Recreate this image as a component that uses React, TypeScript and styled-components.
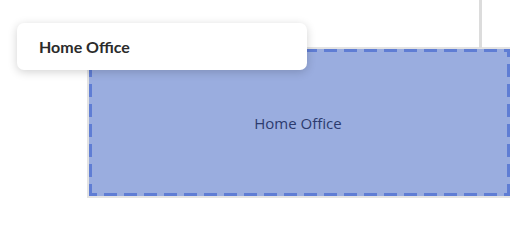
import React from "react";
import styled, { createGlobalStyle } from "styled-components";

const Global = createGlobalStyle`
  html, body { margin: 0; padding: 0; background: #ffffff; }
  body { width: 510px; height: 249px; overflow: hidden; }
`;

const Canvas = styled.div`
  position: relative;
  width: 510px;
  height: 249px;
  background: #ffffff;
  padding: 47px 0 0 87px;
  box-sizing: border-box;
  overflow: hidden;
`;

const GuideLine = styled.div`
  position: absolute;
  left: 479px;
  top: 0;
  width: 3px;
  height: 48px;
  background: #dcdcdc;
`;

const RegionFrame = styled.div`
  width: 423px;
  height: 151px;
  box-sizing: border-box;
  border: 2px solid #e3e3e3;
  border-right: none;
  display: flex;
`;

const dash = "#5f7dd4";

const Region = styled.div`
  flex: 1;
  box-sizing: border-box;
  background:
    linear-gradient(90deg, ${dash} 65%, transparent 65%) -5px 0 / 20px 3px repeat-x,
    linear-gradient(90deg, ${dash} 65%, transparent 65%) -5px 100% / 20px 3px repeat-x,
    linear-gradient(180deg, ${dash} 65%, transparent 65%) 0 -5px / 3px 20px repeat-y,
    linear-gradient(180deg, ${dash} 65%, transparent 65%) 100% -5px / 3px 20px repeat-y,
    #9aaddf;
  display: flex;
  align-items: center;
  justify-content: center;
  font-family: "Open Sans", "Noto Sans", sans-serif;
  font-size: 15px;
  color: #2c3b6e;
  padding-right: 3px;
`;

const Tooltip = styled.div`
  position: absolute;
  left: 17px;
  top: 23px;
  width: 290px;
  height: 47px;
  box-sizing: border-box;
  background: #ffffff;
  border-radius: 7px;
  box-shadow: 0 2px 10px rgba(0, 0, 0, 0.18);
  display: flex;
  align-items: center;
  padding-left: 22px;
  font-family: Lato, "Noto Sans", sans-serif;
  font-weight: 700;
  font-size: 16px;
  color: #2b2b2b;
`;

export default function App() {
  return (
    <>
      <Global />
      <Canvas>
        <GuideLine />
        <RegionFrame>
          <Region>Home Office</Region>
        </RegionFrame>
        <Tooltip>Home Office</Tooltip>
      </Canvas>
    </>
  );
}
